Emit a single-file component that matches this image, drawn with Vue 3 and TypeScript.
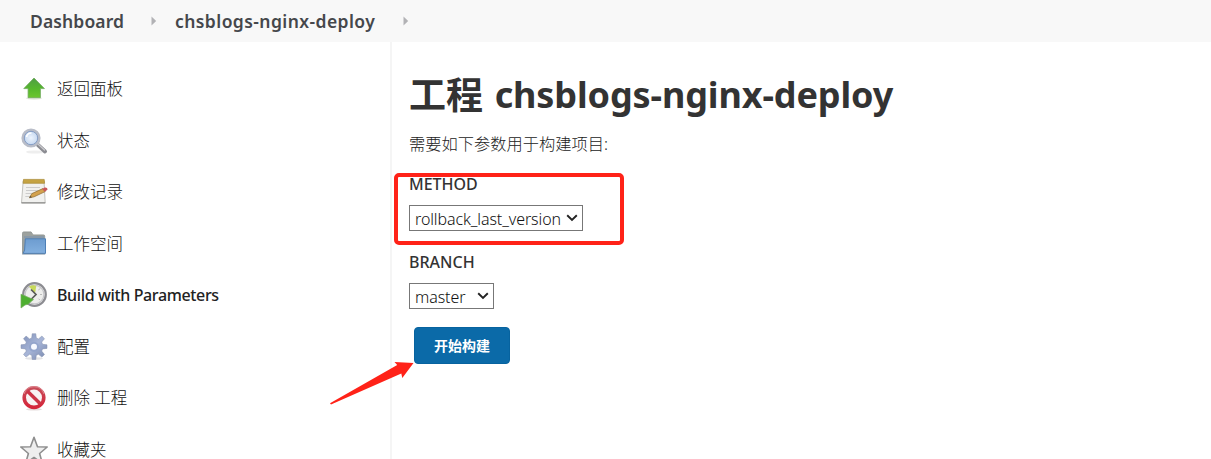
<script setup lang="ts">
interface Task { icon: string; label: string; strong?: boolean }

const tasks: Task[] = [
  { icon: 'up', label: '返回面板' },
  { icon: 'search', label: '状态' },
  { icon: 'notepad', label: '修改记录' },
  { icon: 'folder', label: '工作空间' },
  { icon: 'build', label: 'Build with Parameters', strong: true },
  { icon: 'gear', label: '配置' },
  { icon: 'delete', label: '删除 工程' },
  { icon: 'star', label: '收藏夹' },
]
</script>

<template>
  <div class="page">
    <header class="crumbs">
      <a class="crumb first">Dashboard</a>
      <svg class="sep" width="6" height="10" viewBox="0 0 6 10"><path d="M.5 .5 5.2 5 .5 9.5z" fill="#b2b2b5" /></svg>
      <a class="crumb second">chsblogs-nginx-deploy</a>
      <svg class="sep" width="6" height="10" viewBox="0 0 6 10"><path d="M.5 .5 5.2 5 .5 9.5z" fill="#b2b2b5" /></svg>
    </header>
    <div class="body">
      <nav class="side">
        <a v-for="t in tasks" :key="t.icon" class="task">
          <svg class="icon" width="28" height="28" viewBox="0 0 28 28">
            <defs>
              <linearGradient id="green" x1="0" y1="0" x2="0" y2="1"><stop offset="0" stop-color="#4f9d45" /><stop offset=".55" stop-color="#56b82c" /><stop offset="1" stop-color="#6cc62f" /></linearGradient>
              <linearGradient id="blue" x1="0" y1="0" x2="0" y2="1"><stop offset="0" stop-color="#6d9cd0" /><stop offset="1" stop-color="#83b0df" /></linearGradient>
              <linearGradient id="steel" x1="0" y1="0" x2="1" y2="1"><stop offset="0" stop-color="#7f90b8" /><stop offset=".5" stop-color="#a7b5d7" /><stop offset="1" stop-color="#7787ad" /></linearGradient>
              <linearGradient id="red" x1="0" y1="0" x2="0" y2="1"><stop offset="0" stop-color="#c74b58" /><stop offset="1" stop-color="#d5263a" /></linearGradient>
              <radialGradient id="lens"><stop offset="0" stop-color="#edf4fd" /><stop offset="1" stop-color="#bfd3ee" /></radialGradient>
            </defs>
            <template v-if="t.icon === 'up'">
              <ellipse cx="14" cy="23.2" rx="8" ry="1.5" fill="#e3e6df" />
              <path d="M14 3 24.4 13.6H20.4V22.7H8.1V13.6H3.8z" fill="url(#green)" stroke="#70a95c" stroke-width=".8" />
            </template>
            <template v-else-if="t.icon === 'search'">
              <ellipse cx="15" cy="25" rx="9" ry="1.6" fill="#eeeeee" />
              <path d="m18 18 7 6.5" stroke="#8b8c92" stroke-width="4" stroke-linecap="round" />
              <path d="m18.5 17.5 6 5.6" stroke="#c9c9cd" stroke-width="1.3" stroke-linecap="round" />
              <circle cx="11" cy="11" r="8.1" fill="url(#lens)" stroke="#b9bdc8" stroke-width="3" />
              <circle cx="11" cy="11" r="6.7" fill="none" stroke="#7e98c3" stroke-width=".9" />
              <path d="M6.5 10a5 5 0 0 1 5-4" stroke="#fff" stroke-width="1.7" fill="none" />
            </template>
            <template v-else-if="t.icon === 'notepad'">
              <path d="M3.2 3h20.8l1.2 22H1.5z" fill="#f1f1ef" stroke="#c2c2be" />
              <path d="M1.5 24.8h23.8" stroke="#929290" stroke-width="1.3" />
              <path d="M3.5 1.4h20.7l.4 3.9H3.1z" fill="#c5a343" stroke="#a88832" stroke-width=".7" />
              <path d="M6 9.5h14M6 12.5h12M5.6 15.5h9M5.3 18.5h5" stroke="#cccccc" />
              <path d="m9.4 19.8 2.5-4.2 11-5 2.2 3-11 5.2z" fill="#d4a24e" stroke="#96733b" stroke-width=".8" />
              <path d="m22.2 10.9 2.4-1.3q2.9-.4 3 2L25 13.7z" fill="#c9575b" />
              <path d="m9.4 19.8 1-1.7 1.5 1.2z" fill="#444" />
            </template>
            <template v-else-if="t.icon === 'folder'">
              <path d="M2.5 23.5V3.2q0-1.3 1.3-1.3h7.3l2 3h10.4q1.2 0 1.2 1.2v17z" fill="#9ca19e" stroke="#8a918f" stroke-width=".8" />
              <path d="M4 7h20" stroke="#7790b0" />
              <path d="M5.3 8.8H25.5V23.4H3.2L4.6 20z" fill="url(#blue)" stroke="#4e7fb6" />
              <path d="M2.2 24.2h23" stroke="#71869b" stroke-width=".7" />
            </template>
            <template v-else-if="t.icon === 'build'">
              <circle cx="14.5" cy="13.5" r="11.3" fill="#eeeeec" stroke="#8c8c91" stroke-width="2.2" />
              <circle cx="14.5" cy="13.5" r="9.4" fill="none" stroke="#c5c5c9" stroke-width="1.2" />
              <path d="M9 5.4q4-2.1 7.3-.4l-1.3 7.4z" fill="#c7d95b" />
              <path d="m11 8.5 5 5-4.5 4.5" fill="none" stroke="#5a5b58" stroke-width="1.7" />
              <path d="M20.4 7.5 18.3 9M22 13.5h-2M19.8 19l-1.3-1.3" stroke="#bbb" />
              <path d="M1 13.2 13.5 18.6 10.2 21.2q-1.3 2.5-5.2 2.8l-4 3z" fill="#4eaf31" stroke="#75ad5b" stroke-width=".7" />
            </template>
            <template v-else-if="t.icon === 'gear'">
              <ellipse cx="14" cy="25.5" rx="9" ry="1.3" fill="#e4e4e6" />
              <path fill="url(#steel)" stroke="#8490ac" stroke-width=".5" d="m11.7 5 .5-4.3h3.6l.5 4.3 2.2.9 3.4-2.8 2.6 2.6-2.8 3.4.9 2.2 4.4.5v3.6l-4.4.5-.9 2.2 2.8 3.4-2.6 2.6-3.4-2.8-2.2.9-.5 4.3h-3.6l-.5-4.3-2.2-.9-3.4 2.8-2.6-2.6 2.8-3.4-.9-2.2-4.4-.5v-3.6l4.4-.5.9-2.2-2.8-3.4 2.6-2.6 3.4 2.8z" />
              <circle cx="14" cy="14" r="5" fill="#94a5cc" /><circle cx="14" cy="13.7" r="3" fill="#f8faff" />
            </template>
            <template v-else-if="t.icon === 'delete'">
              <ellipse cx="14" cy="25.3" rx="8" ry="1.3" fill="#e5dddd" />
              <circle cx="14" cy="13.6" r="9.8" fill="#f8f3f3" stroke="url(#red)" stroke-width="3.6" />
              <path d="m7.5 7.2 13 12.8" stroke="#cc3446" stroke-width="3.4" />
              <path d="M4 10a10.5 10.5 0 0 1 20 0" fill="none" stroke="#e69aa1" stroke-width=".8" />
            </template>
            <template v-else>
              <path d="m14 1.2 3.5 9.6 9.7.2-7.6 6.5 2.8 9.8L14 21.5l-8.4 5.8 2.8-9.8L.8 11l9.7-.2z" fill="#eeeeee" stroke="#8e8e8e" stroke-width="1.6" stroke-linejoin="round" />
            </template>
          </svg>
          <span :class="{ strong: t.strong }">{{ t.label }}</span>
        </a>
      </nav>
      <main class="main">
        <h1>工程 <span class="name">chsblogs-nginx-deploy</span></h1>
        <p class="desc">需要如下参数用于构建项目:</p>
        <div class="param">
          <div class="pname">METHOD</div>
          <div class="select wide"><span class="value">rollback_last_version</span>
            <svg width="12" height="8" viewBox="0 0 12 8"><path d="m1.2 1.3 4.8 4.6 4.8-4.6" fill="none" stroke="#222" stroke-width="1.9" /></svg>
          </div>
          <div class="highlight"></div>
        </div>
        <div class="param">
          <div class="pname">BRANCH</div>
          <div class="select narrow"><span class="value">master</span>
            <svg width="12" height="8" viewBox="0 0 12 8"><path d="m1.2 1.3 4.8 4.6 4.8-4.6" fill="none" stroke="#222" stroke-width="1.9" /></svg>
          </div>
        </div>
        <div class="submit">
          <button type="button">开始构建</button>
          <svg class="arrow" width="84" height="44" viewBox="0 0 84 44"><path d="M0 42.2 67.2 4 64.5 1 83.5 2 72.3 17 71.3 12.5 1 43.5z" fill="#ff2218" /></svg>
        </div>
      </main>
    </div>
  </div>
</template>

<style>
body { overflow: hidden; }
</style>
<style scoped>
.page { width: 1211px; height: 459px; overflow: hidden; background: #fff; color: #333; font-family: "Noto Sans", "Noto Sans CJK SC", sans-serif; }
.crumbs { height: 42px; background: #f8f8f8; display: flex; align-items: center; padding-left: 30px; box-sizing: border-box; }
.crumb { font-size: 17.5px; line-height: 42px; font-weight: 600; color: #45474b; white-space: nowrap; }
.first { width: 121px; letter-spacing: .12px; }
.second { width: 228px; margin-left: 18px; letter-spacing: .43px; }
.sep { flex: none; }
.body { display: flex; height: 417px; }
.side { width: 392px; flex: none; padding-top: 21.3px; box-sizing: border-box; border-right: 2px solid #f5f5f5; }
.task { display: flex; align-items: center; height: 51.5px; padding-left: 20px; gap: 9px; font-size: 16.5px; line-height: 22px; font-weight: 300; color: #111; white-space: nowrap; }
.icon { flex: none; }
.strong { font-weight: 500; font-size: 16px; letter-spacing: -.37px; color: #222; }
.main { padding-left: 17px; flex: 1; }
h1 { margin: 29px 0 0; height: 48px; font-size: 37px; line-height: 48px; font-weight: 700; color: #333; white-space: nowrap; }
.name { font-size: 36px; line-height: 1; vertical-align: 1px; letter-spacing: -.12px; margin-left: 2px; }
.desc { margin: 12px 0 0; font-size: 16.25px; line-height: 26px; font-weight: 300; color: #222; }
.param { position: relative; height: 78px; }
.param:first-of-type { margin-top: 15px; }
.pname { font-size: 16px; line-height: 25px; font-weight: 500; color: #333; }
.select { margin-top: 8px; height: 26px; box-sizing: border-box; border: 1px solid #777; display: flex; align-items: center; justify-content: space-between; padding: 0 4px 0 5px; font-size: 16px; line-height: 24px; font-weight: 300; color: #111; }
.wide { width: 174px; }
.narrow { width: 85px; }
.value { white-space: nowrap; letter-spacing: -.1px; padding-top: 1px; }
.highlight { position: absolute; left: -15.5px; top: 1px; width: 230px; height: 72px; box-sizing: border-box; border: 4px solid #ff2218; border-radius: 5px; }
.submit { position: relative; padding-left: 5px; margin-top: -1px; }
button { display: block; width: 96px; height: 37px; padding: 0; border: 1px solid #07639f; border-radius: 4px; background: #0b6aa8; color: #fff; font: 700 14px/35px "Noto Sans", "Noto Sans CJK SC", sans-serif; }
.arrow { position: absolute; left: -79px; top: 34px; }
</style>
